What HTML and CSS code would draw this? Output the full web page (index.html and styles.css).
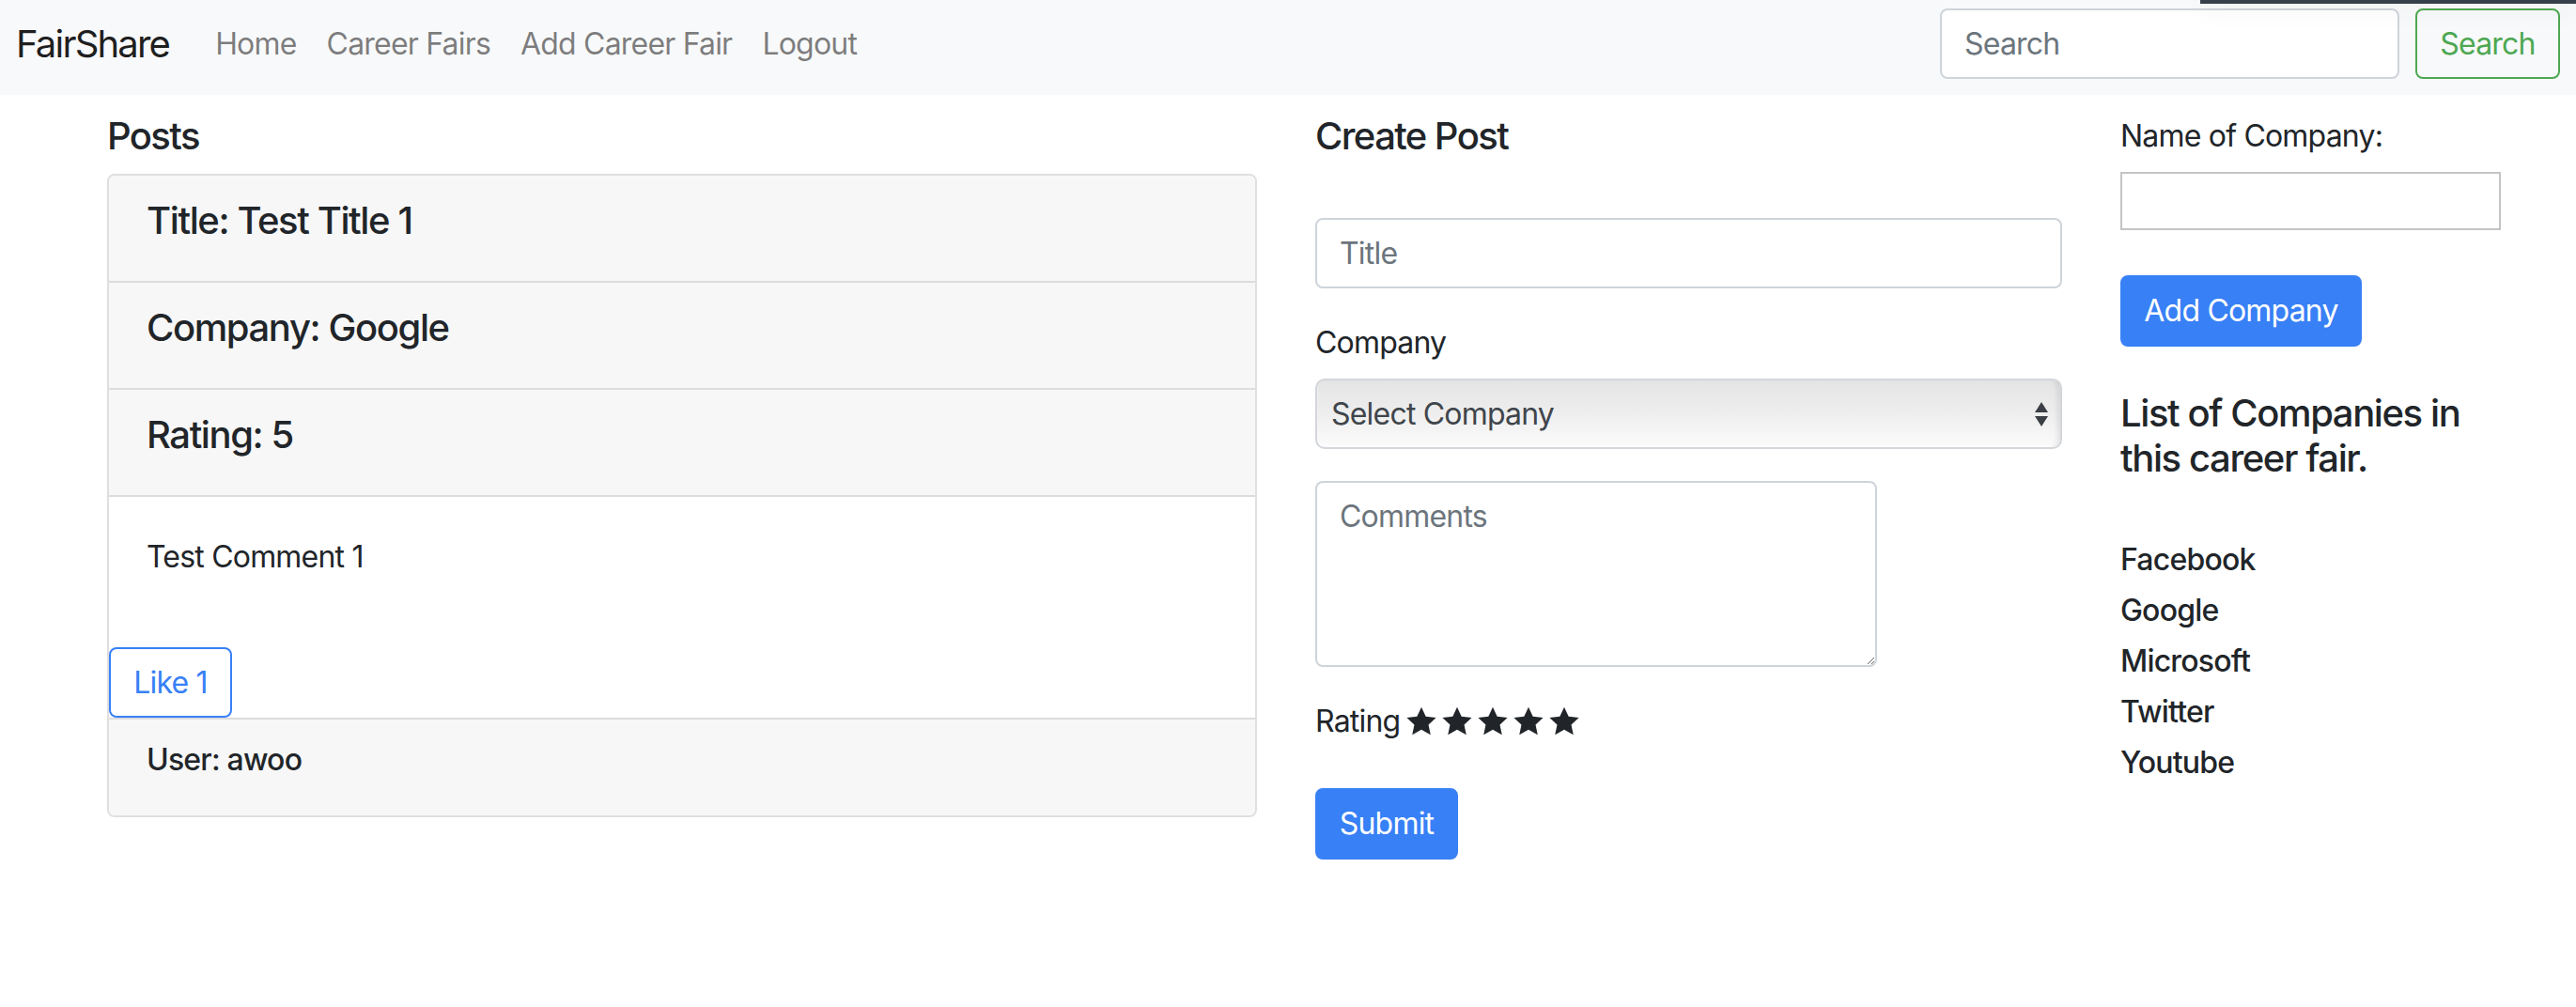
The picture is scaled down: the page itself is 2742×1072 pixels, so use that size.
FILE: index.html
```html
<!DOCTYPE html>
<html lang="en">
<head>
<meta charset="utf-8">
<title>FairShare</title>
<link rel="stylesheet" href="styles.css">
</head>
<body>
<div class="topbar"></div>
<nav class="navbar">
  <a class="brand" href="#">FairShare</a>
  <ul class="nav-links">
    <li><a href="#">Home</a></li>
    <li><a href="#">Career Fairs</a></li>
    <li><a href="#">Add Career Fair</a></li>
    <li><a href="#">Logout</a></li>
  </ul>
  <form class="search-form">
    <input class="search-input" type="text" placeholder="Search">
    <button class="btn-search" type="button">Search</button>
  </form>
</nav>

<main class="layout">
  <section class="col-posts">
    <h5 class="heading">Posts</h5>
    <div class="card">
      <div class="card-header"><h5>Title: Test Title 1</h5></div>
      <div class="card-header"><h5>Company: Google</h5></div>
      <div class="card-header"><h5>Rating: 5</h5></div>
      <div class="card-body"><p>Test Comment 1</p></div>
      <button class="btn-like" type="button">Like 1</button>
      <div class="card-footer"><h6>User: awoo</h6></div>
    </div>
  </section>

  <section class="col-create">
    <h5 class="heading">Create Post</h5>
    <form class="post-form">
      <div class="form-group">
        <input class="form-control" type="text" placeholder="Title">
      </div>
      <div class="form-group">
        <label class="label">Company</label>
        <div class="select-wrap">
          <select class="select">
            <option>Select Company</option>
          </select>
          <svg class="select-arrows" width="16" height="30" viewBox="0 0 16 30"><path d="M8 2 L15 13 L1 13 Z" fill="#3b3f45"/><path d="M1 17 L15 17 L8 28 Z" fill="#3b3f45"/></svg>
        </div>
      </div>
      <div class="form-group">
        <textarea class="form-control textarea" placeholder="Comments"></textarea>
      </div>
      <div class="rating">
        <span>Rating</span>
        <span class="stars">
          <svg viewBox="0 0 24 24" width="34" height="34"><path d="M12 1.2l3.3 7.1 7.7.9-5.7 5.2 1.6 7.7L12 18.2l-6.9 3.9 1.6-7.7L1 9.2l7.7-.9z" fill="#212529"/></svg>
          <svg viewBox="0 0 24 24" width="34" height="34"><path d="M12 1.2l3.3 7.1 7.7.9-5.7 5.2 1.6 7.7L12 18.2l-6.9 3.9 1.6-7.7L1 9.2l7.7-.9z" fill="#212529"/></svg>
          <svg viewBox="0 0 24 24" width="34" height="34"><path d="M12 1.2l3.3 7.1 7.7.9-5.7 5.2 1.6 7.7L12 18.2l-6.9 3.9 1.6-7.7L1 9.2l7.7-.9z" fill="#212529"/></svg>
          <svg viewBox="0 0 24 24" width="34" height="34"><path d="M12 1.2l3.3 7.1 7.7.9-5.7 5.2 1.6 7.7L12 18.2l-6.9 3.9 1.6-7.7L1 9.2l7.7-.9z" fill="#212529"/></svg>
          <svg viewBox="0 0 24 24" width="34" height="34"><path d="M12 1.2l3.3 7.1 7.7.9-5.7 5.2 1.6 7.7L12 18.2l-6.9 3.9 1.6-7.7L1 9.2l7.7-.9z" fill="#212529"/></svg>
        </span>
      </div>
      <button class="btn-primary btn-submit" type="button">Submit</button>
    </form>
  </section>

  <section class="col-companies">
    <label class="label">Name of Company:</label>
    <input class="plain-input" type="text">
    <button class="btn-primary btn-add" type="button">Add Company</button>
    <h5 class="list-heading">List of Companies in this career fair.</h5>
    <div class="company-list">
      <h6>Facebook</h6>
      <h6>Google</h6>
      <h6>Microsoft</h6>
      <h6>Twitter</h6>
      <h6>Youtube</h6>
    </div>
  </section>
</main>
</body>
</html>
```

FILE: styles.css
```css
* { box-sizing: border-box; }

body {
  margin: 0;
  font-family: Inter, "Noto Sans", "Liberation Sans", sans-serif;
  font-size: 32px;
  line-height: 48px;
  letter-spacing: -0.025em;
  color: #212529;
  background: #fff;
}

.topbar {
  position: absolute;
  top: 0;
  left: 2342px;
  right: 0;
  height: 4px;
  background: #36404a;
  box-shadow: 0 6px 24px rgba(0, 0, 0, 0.12);
  z-index: 5;
}

/* navbar */
.navbar {
  height: 101px;
  background: #f8f9fa;
  display: flex;
  align-items: center;
  padding: 0 17px 8px;
}
.brand {
  font-size: 40px;
  line-height: 60px;
  letter-spacing: -0.045em;
  color: rgba(0, 0, 0, 0.9);
  text-decoration: none;
  margin-right: 33px;
}
.nav-links {
  list-style: none;
  margin: 0;
  padding: 0;
  display: flex;
}
.nav-links a {
  display: block;
  padding: 0 16px;
  color: rgba(0, 0, 0, 0.5);
  text-decoration: none;
}
.search-form {
  margin-left: auto;
  display: flex;
  align-items: center;
}
.search-input {
  width: 489px;
  height: 75px;
  border: 2px solid #ced4da;
  border-radius: 8px;
  padding: 0 24px;
  font: inherit;
  letter-spacing: inherit;
  color: #495057;
  background: #fff;
}
.search-input::placeholder { color: #6c757d; }
.btn-search {
  margin-left: 17px;
  width: 154px;
  height: 75px;
  border: 2px solid #4ea852;
  border-radius: 8px;
  background: transparent;
  color: #4ea852;
  font: inherit;
  letter-spacing: inherit;
  padding: 0;
}

/* layout */
.layout {
  display: grid;
  grid-template-columns: 1224px 795px 422px;
  column-gap: 62px;
  padding: 20px 0 0 114px;
  align-items: start;
}

.heading {
  margin: 0 0 16px;
  font-size: 40px;
  line-height: 48px;
  font-weight: 500;
  letter-spacing: -0.04em;
}

/* card */
.card {
  border: 2px solid #dfdfdf;
  border-radius: 8px;
  overflow: hidden;
  display: flex;
  flex-direction: column;
  align-items: stretch;
}
.card-header {
  background: #f7f7f7;
  padding: 24px 40px;
  border-bottom: 2px solid #dcdcdc;
}
.card-header h5 {
  margin: 0 0 16px;
  font-size: 40px;
  line-height: 48px;
  font-weight: 500;
  letter-spacing: -0.035em;
}
.card-body {
  padding: 40px;
}
.card-body p {
  margin: 0 0 32px;
}
.btn-like {
  align-self: flex-start;
  width: 131px;
  height: 75px;
  border: 2px solid #3880f6;
  border-radius: 8px;
  background: #fff;
  color: #3880f6;
  font: inherit;
  letter-spacing: inherit;
  padding: 0;
}
.card-footer {
  background: #f7f7f7;
  padding: 24px 40px;
  border-top: 2px solid #dcdcdc;
}
.card-footer h6 {
  margin: 0 0 16px;
  font-size: 32px;
  line-height: 38px;
  font-weight: 500;
}

/* create post */
.post-form {
  margin-top: 63px;
}
.form-group {
  margin-bottom: 34px;
}
.form-control {
  display: block;
  width: 795px;
  height: 75px;
  border: 2px solid #ced4da;
  border-radius: 8px;
  padding: 0 24px;
  font: inherit;
  letter-spacing: inherit;
  color: #495057;
  background: #fff;
}
.form-control::placeholder { color: #6c757d; }
.label {
  display: block;
  margin-bottom: 14px;
}
.select-wrap {
  position: relative;
  width: 795px;
}
.select {
  -webkit-appearance: none;
  appearance: none;
  display: block;
  width: 100%;
  height: 75px;
  border: 2px solid #d3d6da;
  border-radius: 10px;
  padding: 0 15px;
  font: inherit;
  letter-spacing: inherit;
  color: #3f454b;
  background: linear-gradient(to bottom, #e4e4e4 0%, #ededed 45%, #fbfbfb 100%);
  box-shadow: inset -6px 0 6px -4px rgba(0, 0, 0, 0.12), inset 0 -2px 3px rgba(255, 255, 255, 0.8);
}
.select-arrows {
  position: absolute;
  right: 14px;
  top: 23px;
}
.textarea {
  width: 598px;
  height: 198px;
  padding: 12px 24px;
  resize: both;
}
.rating {
  display: flex;
  align-items: center;
  gap: 6px;
  height: 48px;
  margin-bottom: 47px;
}
.stars {
  display: flex;
  gap: 4px;
}
.stars svg { display: block; }

.btn-primary {
  border: 2px solid #3880f6;
  background: #3880f6;
  color: #fff;
  border-radius: 8px;
  font: inherit;
  letter-spacing: inherit;
  padding: 0;
  height: 76px;
}
.btn-submit { width: 152px; }

/* companies */
.col-companies .label {
  margin-bottom: 14px;
}
.plain-input {
  display: block;
  width: 405px;
  height: 62px;
  border: 2px solid #c4c4c4;
  border-radius: 0;
  font: inherit;
  background: #fff;
}
.btn-add {
  display: block;
  margin-top: 48px;
  width: 257px;
}
.list-heading {
  margin: 47px 0 16px;
  font-size: 40px;
  line-height: 48px;
  font-weight: 500;
  letter-spacing: -0.035em;
  width: 400px;
}
.company-list {
  margin-top: 65px;
}
.company-list h6 {
  margin: 0 0 16px;
  font-size: 32px;
  line-height: 38px;
  font-weight: 500;
}
```
